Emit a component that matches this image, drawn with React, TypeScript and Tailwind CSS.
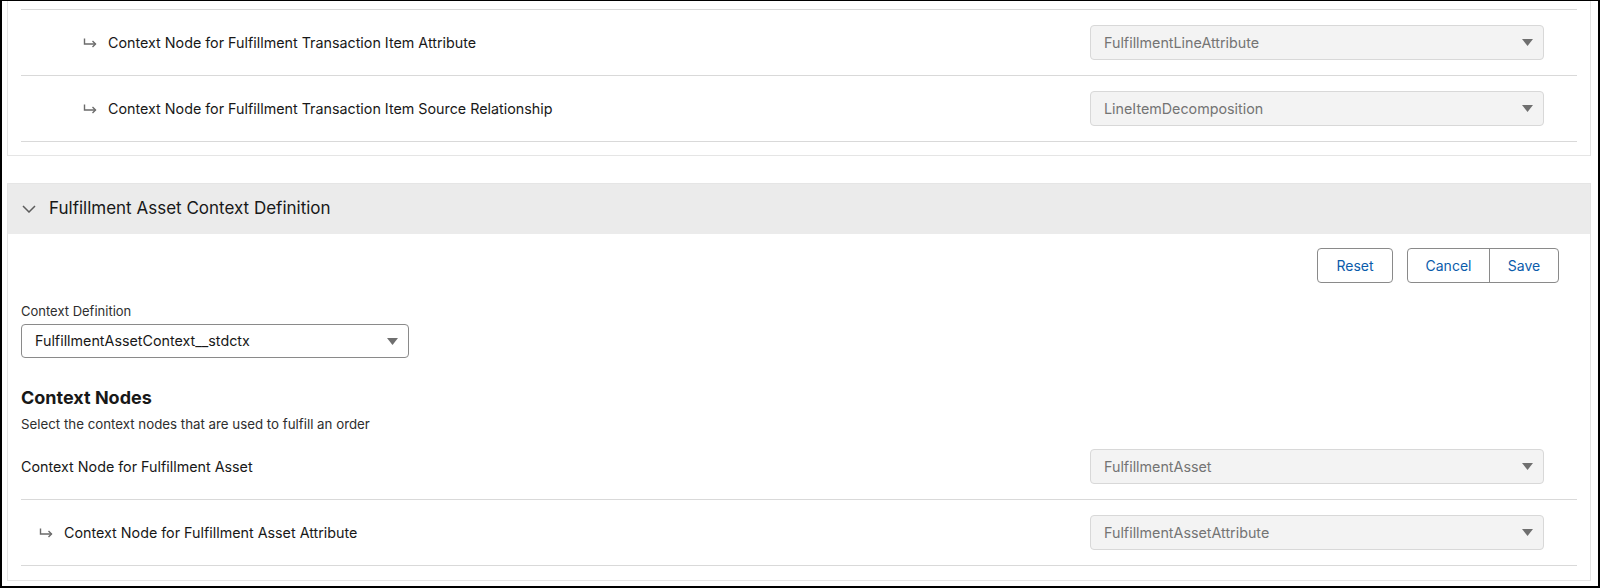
const font = { fontFamily: 'Inter, "Noto Sans", sans-serif' };

function HookArrow() {
  return (
    <svg width="14" height="10" viewBox="0 0 14 10" className="shrink-0">
      <path d="M1.5 0.5 V6 H12.5" fill="none" stroke="#6b6b6b" strokeWidth="1.4" />
      <path d="M9.5 3 L12.5 6 L9.5 9" fill="none" stroke="#6b6b6b" strokeWidth="1.4" />
    </svg>
  );
}

function Caret() {
  return (
    <svg width="11" height="7" viewBox="0 0 11 7" className="shrink-0">
      <path d="M0 0 H11 L5.5 7 Z" fill="#6f6f6f" />
    </svg>
  );
}

function Chevron() {
  return (
    <svg width="14" height="8" viewBox="0 0 14 8" className="shrink-0">
      <polyline points="1,1 7,7 13,1" fill="none" stroke="#5c5c5c" strokeWidth="1.5" />
    </svg>
  );
}

function DisabledSelect({ value }: { value: string }) {
  return (
    <div className="w-[454px] h-[35px] bg-[#f3f3f3] border border-[#d8d8d8] rounded-[4px] flex items-center justify-between pl-[13px] pr-[10px] mr-[33px]">
      <span className="text-[14.3px] text-[#747474]">{value}</span>
      <Caret />
    </div>
  );
}

function NodeRow({ label, value, indent }: { label: string; value: string; indent: 'deep' | 'shallow' }) {
  return (
    <div className="h-[66px] flex items-center justify-between border-b border-[#d9d9d9]">
      <div className={`flex items-center gap-[11px] text-[14.3px] text-[#181818] ${indent === 'deep' ? 'pl-[62px]' : 'pl-[18px]'}`}>
        <HookArrow />
        <span>{label}</span>
      </div>
      <DisabledSelect value={value} />
    </div>
  );
}

export default function App() {
  return (
    <div className="w-[1600px] h-[588px] bg-white border-x-2 border-b-2 border-t border-black overflow-hidden" style={font}>
      <div className="pl-[5px] pr-[7px]">
        {/* previous section, scrolled off the top */}
        <div className="border-x border-b border-[#e5e5e5] px-[13px] pt-[8px] pb-[13px]">
          <div className="border-t border-[#d9d9d9]">
            <NodeRow label="Context Node for Fulfillment Transaction Item Attribute" value="FulfillmentLineAttribute" indent="deep" />
            <NodeRow label="Context Node for Fulfillment Transaction Item Source Relationship" value="LineItemDecomposition" indent="deep" />
          </div>
        </div>

        <div className="mt-[27px] border border-[#e5e5e5]">
          <div className="h-[50px] bg-[#ebebeb] flex items-center gap-[13px] pl-[14px]">
            <Chevron />
            <span className="text-[17px] text-[#181818]">Fulfillment Asset Context Definition</span>
          </div>

          <div className="px-[13px] pb-[14px]">
            <div className="flex justify-end gap-[14px] pt-[14px] pr-[18px]">
              <button className="h-[35px] w-[76px] border border-[#8a8a8a] rounded-[4px] text-[14px] text-[#0b5cab] bg-white">Reset</button>
              <div className="flex h-[35px] border border-[#8a8a8a] rounded-[4px] overflow-hidden">
                <button className="w-[82px] text-[14px] text-[#0b5cab] border-r border-[#8a8a8a]">Cancel</button>
                <button className="w-[68px] text-[14px] text-[#0b5cab]">Save</button>
              </div>
            </div>

            <div className="mt-[19px] text-[13px] leading-[18px] text-[#2e2e2e]">Context Definition</div>
            <div className="mt-[4px] w-[388px] h-[34px] border border-[#8a8a8a] rounded-[4px] flex items-center justify-between pl-[13px] pr-[10px]">
              <span className="text-[14.3px] text-[#181818]">FulfillmentAssetContext__stdctx</span>
              <Caret />
            </div>

            <div className="mt-[28px] text-[18px] font-bold text-[#181818] leading-[24px]">Context Nodes</div>
            <div className="mt-[5px] text-[13.3px] text-[#2e2e2e] leading-[18px]">Select the context nodes that are used to fulfill an order</div>

            <div className="mt-[1px]">
              <div className="h-[66px] flex items-center justify-between border-b border-[#d9d9d9]">
                <span className="text-[14.3px] text-[#181818]">Context Node for Fulfillment Asset</span>
                <DisabledSelect value="FulfillmentAsset" />
              </div>
              <NodeRow label="Context Node for Fulfillment Asset Attribute" value="FulfillmentAssetAttribute" indent="shallow" />
            </div>
          </div>
        </div>
      </div>
    </div>
  );
}
